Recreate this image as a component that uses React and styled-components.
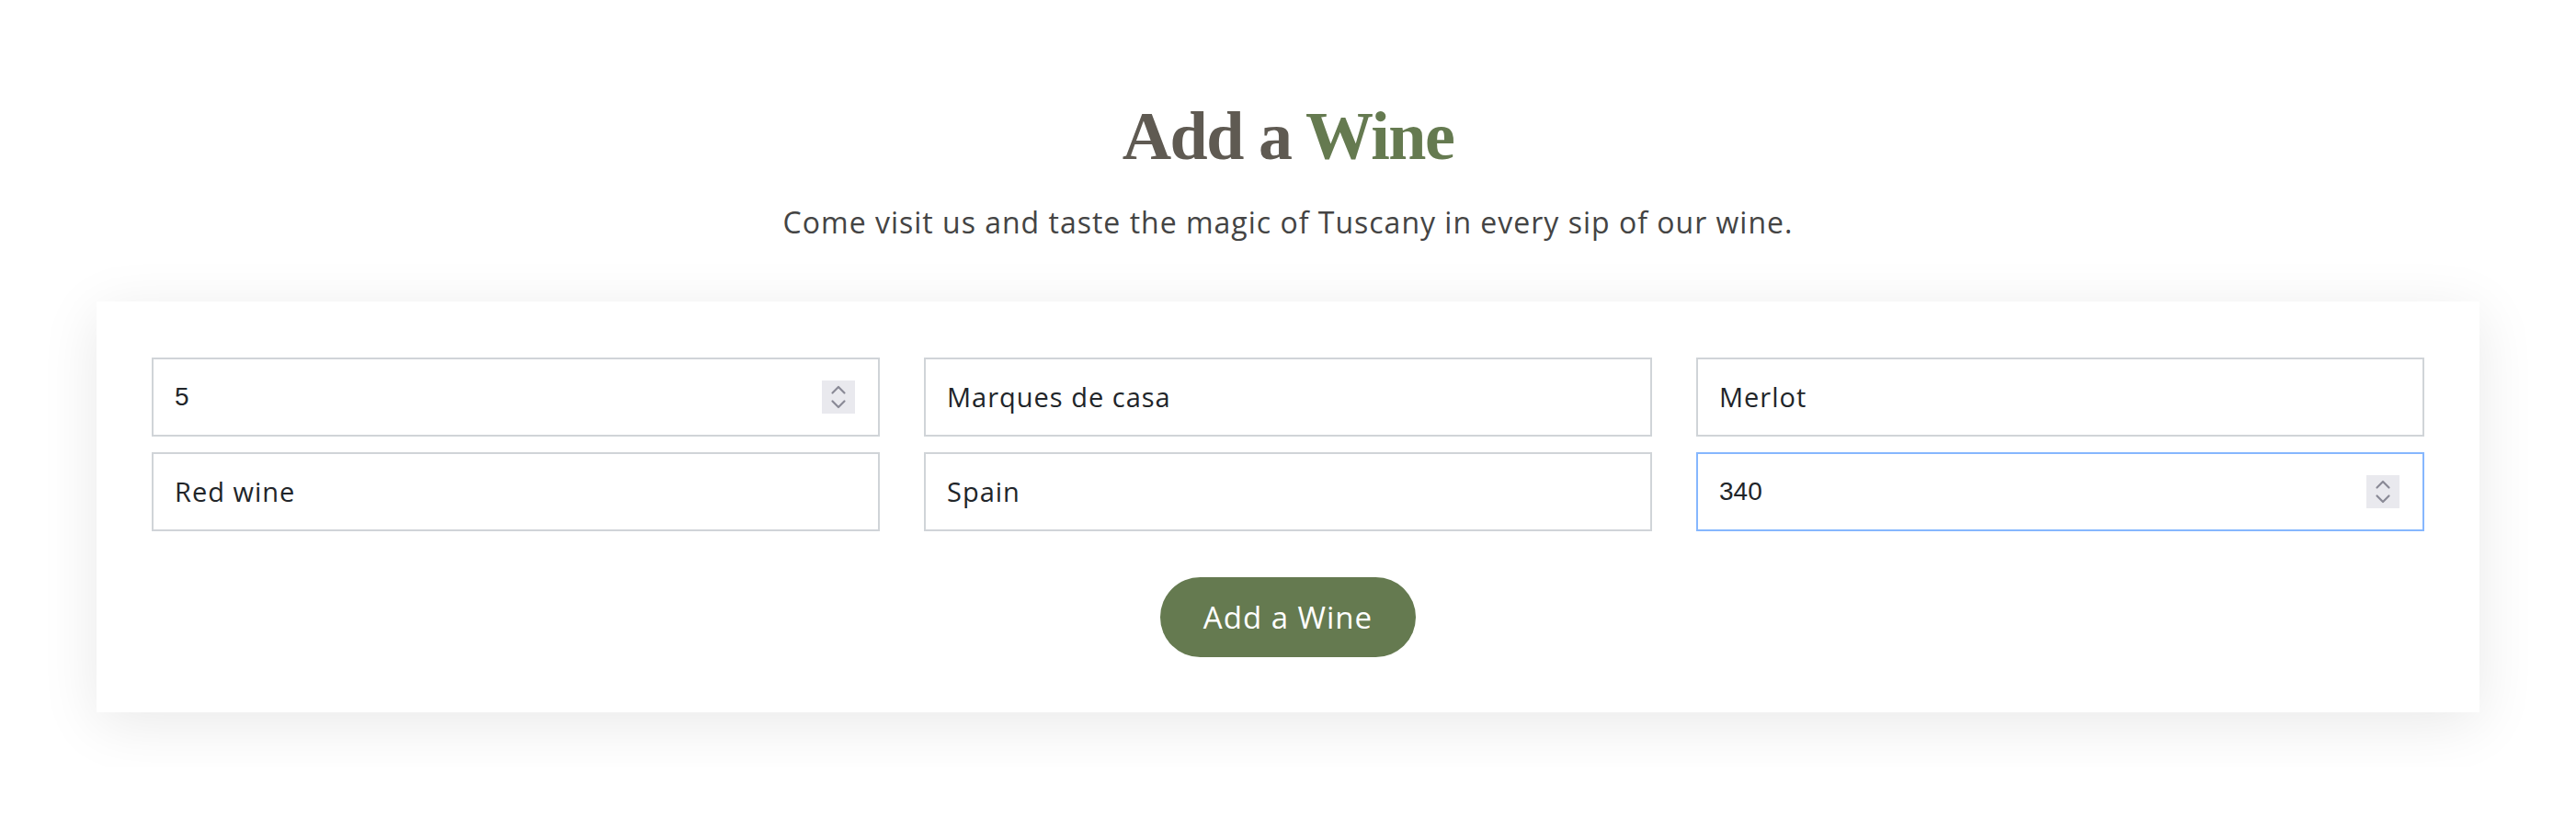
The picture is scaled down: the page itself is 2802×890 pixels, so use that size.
import React from "react";
import styled, { createGlobalStyle } from "styled-components";

const GlobalStyle = createGlobalStyle`
  html, body { margin: 0; padding: 0; background: #ffffff; }
  * { box-sizing: border-box; }
`;

const Page = styled.section`
  padding: 111px 105px 60px;
  display: flex;
  flex-direction: column;
  align-items: center;
`;

const Title = styled.h2`
  margin: 0;
  font-family: "Liberation Serif", "Times New Roman", serif;
  font-weight: 700;
  font-size: 74px;
  line-height: 1;
  letter-spacing: -1.5px;
  color: #5f5a52;
`;

const Accent = styled.span`
  color: #657a50;
`;

const Subtitle = styled.p`
  margin: 34px 0 0;
  font-family: "Open Sans", sans-serif;
  font-size: 32px;
  line-height: 45px;
  letter-spacing: 1px;
  color: #444444;
`;

const Card = styled.form`
  margin-top: 64px;
  width: 100%;
  background: #ffffff;
  box-shadow: 0 12px 60px rgba(0, 0, 0, 0.09);
  padding: 61px 60px 60px;
  display: flex;
  flex-direction: column;
  align-items: center;
`;

const Grid = styled.div`
  width: 100%;
  display: grid;
  grid-template-columns: repeat(3, 1fr);
  column-gap: 48px;
  row-gap: 17px;
`;

const Field = styled.label`
  height: 86px;
  display: flex;
  align-items: center;
  gap: 16px;
  padding: 0 25px 0 23px;
  border: 2px solid ${(p) => (p.$focused ? "#86b7fe" : "#d0d4d8")};
  background: #ffffff;
`;

const Input = styled.input`
  flex: 1;
  min-width: 0;
  border: none;
  outline: none;
  padding: 0;
  background: transparent;
  color: #212529;
  font-family: ${(p) =>
    p.$numeric ? '"Liberation Sans", Arial, sans-serif' : '"Open Sans", sans-serif'};
  font-size: ${(p) => (p.$numeric ? "28px" : "29px")};
  letter-spacing: ${(p) => (p.$numeric ? "0" : "1px")};
  line-height: 42px;
`;

const Spinner = styled.span`
  width: 36px;
  height: 36px;
  flex: none;
  background: #e9e9ee;
  display: flex;
`;

const Button = styled.button`
  margin-top: 50px;
  height: 87px;
  padding: 0 47px;
  border: none;
  border-radius: 44px;
  background: #657a50;
  color: #ffffff;
  font-family: "Open Sans", sans-serif;
  font-size: 33px;
  letter-spacing: 1px;
  line-height: 1;
  cursor: pointer;
`;

const SpinIcon = () => (
  <svg width="36" height="36" viewBox="0 0 36 36" fill="none">
    <path d="M11.5 13.5 L18 7 L24.5 13.5" stroke="#8a8a96" strokeWidth="2.2" strokeLinecap="round" strokeLinejoin="round" />
    <path d="M11.5 22.5 L18 29 L24.5 22.5" stroke="#8a8a96" strokeWidth="2.2" strokeLinecap="round" strokeLinejoin="round" />
  </svg>
);

const fields = [
  { value: "5", numeric: true },
  { value: "Marques de casa" },
  { value: "Merlot" },
  { value: "Red wine" },
  { value: "Spain" },
  { value: "340", numeric: true, focused: true },
];

export default function App() {
  return (
    <>
      <GlobalStyle />
      <Page>
        <Title>
          Add a <Accent>Wine</Accent>
        </Title>
        <Subtitle>Come visit us and taste the magic of Tuscany in every sip of our wine.</Subtitle>
        <Card onSubmit={(e) => e.preventDefault()}>
          <Grid>
            {fields.map((f, i) => (
              <Field key={i} $focused={f.focused}>
                <Input type="text" defaultValue={f.value} $numeric={f.numeric} />
                {f.numeric && (
                  <Spinner>
                    <SpinIcon />
                  </Spinner>
                )}
              </Field>
            ))}
          </Grid>
          <Button type="submit">Add a Wine</Button>
        </Card>
      </Page>
    </>
  );
}
